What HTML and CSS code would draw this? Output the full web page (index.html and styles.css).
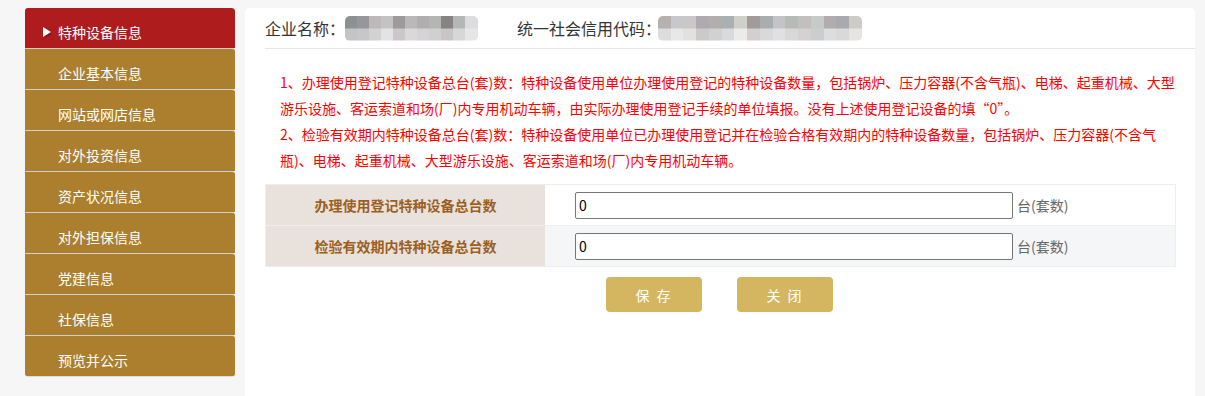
FILE: index.html
```html
<!DOCTYPE html>
<html lang="zh-CN">
<head>
<meta charset="utf-8">
<title>特种设备信息</title>
<link rel="stylesheet" href="styles.css">
</head>
<body>
<div class="page">
  <nav class="sidebar">
    <a class="nav-item active">特种设备信息</a>
    <a class="nav-item">企业基本信息</a>
    <a class="nav-item">网站或网店信息</a>
    <a class="nav-item">对外投资信息</a>
    <a class="nav-item">资产状况信息</a>
    <a class="nav-item">对外担保信息</a>
    <a class="nav-item">党建信息</a>
    <a class="nav-item">社保信息</a>
    <a class="nav-item">预览并公示</a>
  </nav>
  <main class="main">
    <header class="info-bar">
      <span class="info-label">企业名称：</span>
      <span class="mosaic mosaic-name"></span>
      <span class="info-label info-label-code">统一社会信用代码：</span>
      <span class="mosaic mosaic-code"></span>
    </header>
    <div class="content">
      <div class="notes">
        <p>1、办理使用登记特种设备总台(套)数：特种设备使用单位办理使用登记的特种设备数量，包括锅炉、压力容器(不含气瓶)、电梯、起重机械、大型游乐设施、客运索道和场(厂)内专用机动车辆，由实际办理使用登记手续的单位填报。没有上述使用登记设备的填“0”。</p>
        <p>2、检验有效期内特种设备总台(套)数：特种设备使用单位已办理使用登记并在检验合格有效期内的特种设备数量，包括锅炉、压力容器(不含气瓶)、电梯、起重机械、大型游乐设施、客运索道和场(厂)内专用机动车辆。</p>
      </div>
      <div class="form-table">
        <div class="form-row">
          <div class="form-label">办理使用登记特种设备总台数</div>
          <div class="form-field"><input class="num-input" type="text" value="0"><span class="unit">台(套数)</span></div>
        </div>
        <div class="form-row form-row-alt">
          <div class="form-label">检验有效期内特种设备总台数</div>
          <div class="form-field"><input class="num-input" type="text" value="0"><span class="unit">台(套数)</span></div>
        </div>
      </div>
      <div class="actions">
        <button class="btn" type="button">保 存</button>
        <button class="btn" type="button">关 闭</button>
      </div>
    </div>
  </main>
</div>
</body>
</html>
```

FILE: styles.css
```css
* { box-sizing: border-box; }
html, body { margin: 0; padding: 0; }
body {
  background: #f6f6f6;
  font-family: "Noto Sans CJK SC", "Noto Sans", sans-serif;
  font-size: 14px;
  color: #333;
  overflow: hidden;
}
.page {
  display: flex;
  align-items: flex-start;
  gap: 10px;
  padding: 8px 0 0 25px;
}
.sidebar {
  width: 210px;
  flex: none;
  display: flex;
  flex-direction: column;
  border-radius: 3px;
  overflow: hidden;
  border-bottom: 1px solid #dcdcdc;
}
.nav-item {
  position: relative;
  display: block;
  height: 41px;
  padding: 8px 0 0 33px;
  line-height: 32px;
  background: #ab7f2e;
  color: #fff;
  font-size: 14px;
  border-top: 1px solid #cfcfcf;
  border-radius: 0 3px 0 0;
  text-decoration: none;
}
.nav-item.active {
  background: #ae1c1e;
  border-top: none;
  height: 40px;
}
.nav-item.active::before {
  content: "";
  position: absolute;
  left: 18px;
  top: 19px;
  width: 0;
  height: 0;
  border-top: 5px solid transparent;
  border-bottom: 5px solid transparent;
  border-left: 8px solid #fff;
  filter: drop-shadow(1px 1px 1px rgba(60,0,0,0.5));
}
.main {
  width: 950px;
  flex: none;
  min-height: 400px;
  background: #fff;
  border-radius: 5px 5px 0 0;
}
.info-bar {
  display: flex;
  align-items: center;
  height: 41px;
  margin-left: 20px;
  border-bottom: 1px solid #e6e6e6;
  font-size: 16px;
  color: #333;
}
.info-label-code { margin-left: 39px; }
.mosaic {
  display: block;
  height: 25px;
  border-radius: 5px;
  background-repeat: no-repeat;
  background-size: 100% 50%;
  background-position: top left, bottom left;
}
.mosaic-name {
  width: 133px;
  background-image:
    linear-gradient(to right, #8e9192 0 12px, #97969a 12px 24px, #bdb9ba 24px 36px, #c3c3c4 36px 48px, #9c9a9b 48px 60px, #bab8b9 60px 72px, #b0aeaf 72px 84px, #b3b6b3 84px 96px, #878385 96px 108px, #b3b8b7 108px 120px, #dcdbdd 120px),
    linear-gradient(to right, #c3c4c5 0 12px, #c8c6c8 12px 24px, #d3d2d3 24px 36px, #e3e3e5 36px 48px, #ccc8ca 48px 60px, #d9d9da 60px 72px, #d5d3d5 72px 84px, #cfd0cf 84px 96px, #c9c5c7 96px 108px, #d5d8d7 108px 120px, #e6e6e7 120px);
}
.mosaic-code {
  width: 204px;
  margin-left: -3px;
  background-image:
    linear-gradient(to right, #b4b1ae 0 13px, #c8c8cc 13px 25px, #c9c7c7 25px 38px, #aeaab0 38px 51px, #b3aeae 51px 64px, #a9b0b1 64px 76px, #d0d0cb 76px 89px, #a39a9a 89px 102px, #a8aeb0 102px 115px, #c4c4c6 115px 127px, #b8bab8 127px 140px, #c4bfbf 140px 153px, #c8cac9 153px 166px, #b2acaf 166px 178px, #a9aaad 178px 191px, #cccbc6 191px),
    linear-gradient(to right, #dcdcdc 0 13px, #e8e8e8 13px 25px, #e2e1e0 25px 38px, #cacaca 38px 51px, #d2d1d1 51px 64px, #d9dadc 64px 76px, #ebebea 76px 89px, #d3cfcf 89px 102px, #d9d9db 102px 115px, #e0e0e2 115px 127px, #d8d8d8 127px 140px, #d3d1d1 140px 153px, #cbcdcf 153px 166px, #dddddd 166px 178px, #d9d9d9 178px 191px, #e5e4e2 191px);
}
.content {
  width: 911px;
  margin-left: 20px;
  padding-top: 20px;
}
.notes {
  padding-left: 15px;
  color: #ff0000;
  font-size: 14px;
  line-height: 26px;
}
.notes p { margin: 0; }
.form-table {
  margin-top: 11px;
  border: 1px solid #eeeeee;
  border-bottom: none;
}
.form-row {
  display: flex;
  height: 41px;
  border-bottom: 1px solid #eeeeee;
}
.form-label {
  width: 279px;
  flex: none;
  display: flex;
  align-items: center;
  justify-content: center;
  background: #e9e2dc;
  color: #9b5f1f;
  font-weight: bold;
  font-size: 14px;
}
.form-field {
  flex: 1;
  display: flex;
  align-items: center;
  padding-left: 30px;
  background: #fff;
}
.form-row-alt .form-field { background: #f5f6f8; }
.num-input {
  width: 438px;
  height: 27px;
  border: 1px solid #767676;
  border-radius: 2px;
  padding: 0 3px;
  font-family: "Noto Sans CJK SC", "Noto Sans", sans-serif;
  font-size: 14px;
  color: #000;
  background: #fff;
  outline: none;
}
.unit {
  margin-left: 4px;
  color: #666;
  font-size: 14px;
}
.actions {
  display: flex;
  justify-content: center;
  gap: 35px;
  margin-top: 10px;
  padding-right: 2px;
}
.btn {
  width: 96px;
  height: 35px;
  border: none;
  border-radius: 4px;
  background: #d4b661;
  color: #fff;
  font-family: "Noto Sans CJK SC", "Noto Sans", sans-serif;
  font-size: 14px;
  letter-spacing: 2px;
  cursor: pointer;
}
```
